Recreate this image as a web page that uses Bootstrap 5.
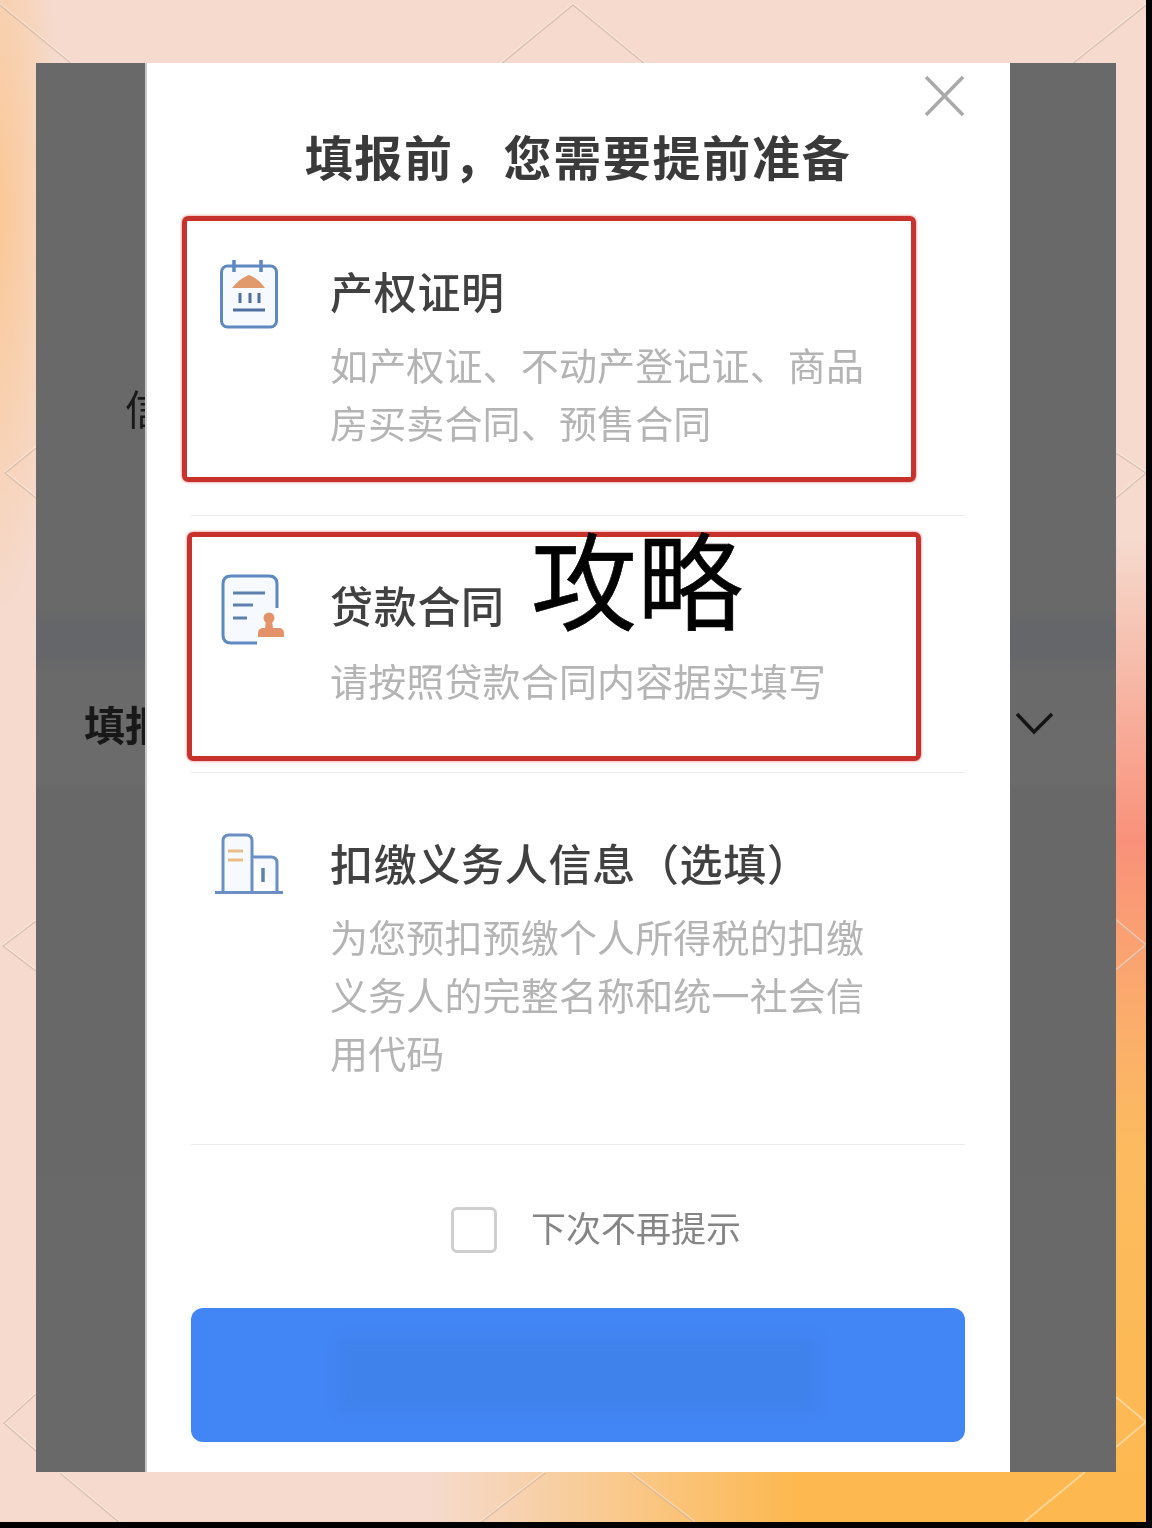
<!doctype html>
<html lang="zh-CN">
<head>
<meta charset="utf-8">
<title>填报前，您需要提前准备</title>
<link href="https://cdn.jsdelivr.net/npm/bootstrap@5.3.0/dist/css/bootstrap.min.css" rel="stylesheet">
<style>
html,body{background:#000;margin:0;overflow:hidden;}
body{font-family:"Noto Sans CJK SC","Liberation Sans",sans-serif;}
.stage{position:relative;width:1146px;height:1522px;padding:63px 30px 50px 36px;
 background:
 url("data:image/svg+xml,%3Csvg xmlns='http://www.w3.org/2000/svg' width='1146' height='1522' fill='none'%3E%3Cg stroke='%23ffffff' stroke-opacity='.4' stroke-width='2'%3E%3Cpath d='M0 4L72 63M501 63L573 4L645 63M1072 63L1146 4M36 447L5 472L36 497M1116 452L1146 472L1116 497M36 920L3 945L36 970M1116 920L1146 945L1116 970M36 1393L4 1422L36 1450M60 1472L120 1522M1116 1397L1146 1422L1116 1447M1085 1472L1024 1522M545 1472L480 1522M630 1472L695 1522'/%3E%3C/g%3E%3Cg stroke='%23c9a98f' stroke-opacity='.6' stroke-width='1.4'%3E%3Cpath d='M0 5L72 64M501 64L573 5L645 64M1072 64L1146 5M36 448L5 473L36 498M1116 453L1146 473L1116 498M36 921L3 946L36 971M1116 921L1146 946L1116 971M36 1394L4 1423L36 1451M60 1473L120 1523M545 1473L480 1523M630 1473L695 1523'/%3E%3C/g%3E%3C/svg%3E") no-repeat 0 0,
 linear-gradient(90deg,rgba(253,184,79,0) 430px,#fdb84f 800px) no-repeat 0 100%/100% 50px,
 linear-gradient(180deg,rgba(249,140,115,0) 540px,#f9917a 840px,#fbb06a 1040px,#fcbb5f 1150px,#fdb84f 1522px) no-repeat 100% 0/30px 100%,
 radial-gradient(ellipse 60px 400px at 0 210px,#fbc896,rgba(251,200,150,0)) no-repeat 0 0,
 #f5dacd;}
.panel{height:1409px;background:#696969;}
.sidecol{background:linear-gradient(180deg,#696969 545px,#65666a 565px,#65666a 590px,#6a6a6a 610px,#6b6b6b 720px,#686868 726px,#696969 1409px);overflow:hidden;white-space:nowrap;}
.sidecol-l{width:109px;padding-left:48px;flex:none;}
.sidecol-r{width:106px;flex:none;}
.ghost1{font-size:41px;line-height:60px;margin:314px 0 0 41px;color:#181818;filter:blur(.6px);}
.ghost2{font-size:41px;line-height:60px;font-weight:700;margin:256px 0 0 0;color:#181818;filter:blur(.6px);}
.chev{display:block;margin:645px 0 0 5px;}
.sheet{position:relative;width:865px;flex:none;background:#fff;padding:13px 45px 0 44px;border-left:2px solid #c9c9c9;}
.xrow{height:40px;}
.htitle{font-size:48px;line-height:52px;letter-spacing:1.7px;font-weight:700;color:#3a3a3a;text-align:center;margin:13px 0 0;filter:blur(.7px);}
.entry{border-bottom:1px solid #ebebeb;}
.entry-a{padding:77px 0 64px;}
.entry-b{padding:57px 0 63px;}
.entry-c{padding:57px 0 63px;}
.ico{flex:none;margin:0 45px 0 24px;filter:blur(.5px);}
.etitle{font-size:43px;line-height:58px;letter-spacing:.7px;margin:3px 0 0;color:#414141;font-weight:500;white-space:nowrap;filter:blur(.7px);}
.entry-b .etitle{margin-top:2px;}
.edesc{font-size:38px;line-height:58px;letter-spacing:.15px;margin:16px 0 0;color:#b4b4b4;white-space:nowrap;filter:blur(.7px);}
.entry-b .edesc{margin-top:18px;}
.nag{margin-top:62px;height:46px;padding-left:260px;}
.tick{width:46px;height:46px;border:3px solid #cfcfcf;border-radius:6px;background:#fff;margin-right:34px;}
.nagtxt{font-size:35px;line-height:45px;color:#858585;filter:blur(.6px);margin-top:-8px;}
.gobtn{display:block;width:100%;height:134px;margin-top:55px;border:0;border-radius:12px;background:#4285f4;padding:32px 150px;}
.gobtn span{display:block;height:70px;background:#3f82ec;filter:blur(6px);}
.redbox{position:absolute;width:734px;border:5px solid #c8322d;border-radius:6px;box-shadow:0 0 3px rgba(203,53,48,.7);}
.rb1{left:35px;top:153px;height:266px;}
.rb2{left:40px;top:469px;height:229px;}
.wmark{position:absolute;left:531px;top:514px;font-size:106px;line-height:124px;color:#000;white-space:nowrap;-webkit-text-stroke:.6px #000;}
</style>
</head>
<body>
<div class="stage">
 <div class="panel d-flex">
  <div class="sidecol sidecol-l">
   <div class="ghost1">信</div>
   <div class="ghost2">填报</div>
  </div>
  <div class="sheet">
   <div class="xrow d-flex justify-content-end">
    <svg width="41" height="40" viewBox="0 0 41 40" fill="none" stroke="#a9a9a9" stroke-width="3.5" aria-hidden="true"><path d="M2 1L39 39M39 1L2 39"/></svg>
   </div>
   <h1 class="htitle">填报前，您需要提前准备</h1>

   <div class="entry entry-a d-flex">
    <svg class="ico" width="70" height="72" viewBox="215 258 70 72" fill="none" aria-hidden="true">
     <rect x="221.5" y="266" width="55" height="61" rx="6" fill="#f6faff" stroke="#5d88c0" stroke-width="3"/>
     <path d="M234 260V272M261 260V272" stroke="#5d88c0" stroke-width="3.5"/>
     <path d="M232 288Q240 278 249 275Q258 278 265 288Z" fill="#e09a6c"/>
     <path d="M240 293V303M250 293V303M259 293V303" stroke="#4f6f9f" stroke-width="3"/>
     <path d="M233 310H265" stroke="#4f6f9f" stroke-width="3"/>
    </svg>
    <div>
     <h2 class="etitle">产权证明</h2>
     <p class="edesc">如产权证、不动产登记证、商品<br>房买卖合同、预售合同</p>
    </div>
   </div>

   <div class="entry entry-b d-flex">
    <svg class="ico" width="70" height="72" viewBox="215 572 70 72" fill="none" aria-hidden="true">
     <path d="M277 607V583Q277 575 269 575H231Q223 575 223 583V634Q223 642 231 642H257" fill="#f6faff" stroke="#5d88c0" stroke-width="3"/>
     <path d="M233 592H265" stroke="#5d80ad" stroke-width="3"/>
     <path d="M233 604H253M233 617H247" stroke="#5d80ad" stroke-width="3"/>
     <circle cx="269" cy="617" r="5.5" fill="#e4926a"/>
     <path d="M266 620H272L273 627H280Q284 628 284 632V636H258V632Q258 628 262 627H265Z" fill="#e4926a"/>
    </svg>
    <div>
     <h2 class="etitle">贷款合同</h2>
     <p class="edesc">请按照贷款合同内容据实填写</p>
    </div>
   </div>

   <div class="entry entry-c d-flex">
    <svg class="ico" width="70" height="66" viewBox="215 830 70 66" fill="none" aria-hidden="true">
     <path d="M223 892V841Q223 835 229 835H246Q252 835 252 841V892" fill="#f6faff" stroke="#6b8fc2" stroke-width="3"/>
     <path d="M252 857H271Q277 857 277 863V892" fill="#f6faff" stroke="#6b8fc2" stroke-width="3"/>
     <path d="M215 892.5H283" stroke="#6b8fc2" stroke-width="3"/>
     <path d="M228 851H243M228 860H243" stroke="#e9bd85" stroke-width="3"/>
     <path d="M263 868V882" stroke="#5d80ad" stroke-width="3.5"/>
    </svg>
    <div>
     <h2 class="etitle">扣缴义务人信息（选填）</h2>
     <p class="edesc">为您预扣预缴个人所得税的扣缴<br>义务人的完整名称和统一社会信<br>用代码</p>
    </div>
   </div>

   <div class="nag d-flex align-items-center">
    <div class="tick flex-shrink-0"></div>
    <div class="nagtxt">下次不再提示</div>
   </div>
   <button type="button" class="gobtn" aria-label="开始填报"><span></span></button>

   <div class="redbox rb1"></div>
   <div class="redbox rb2"></div>
  </div>
  <div class="sidecol sidecol-r">
   <svg class="chev" width="44" height="32" viewBox="0 0 44 32" fill="none" stroke="#151515" stroke-width="3.5" aria-hidden="true"><path d="M2 6L19 24L37 6"/></svg>
  </div>
 </div>
 <div class="wmark">攻略</div>
</div>
<script src="https://cdn.jsdelivr.net/npm/bootstrap@5.3.0/dist/js/bootstrap.bundle.min.js"></script>
</body>
</html>
